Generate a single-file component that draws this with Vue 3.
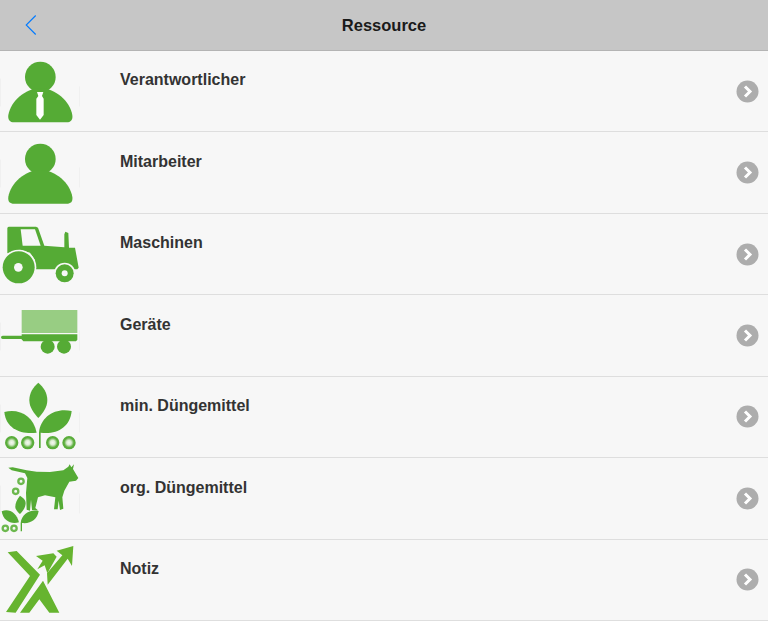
<script setup>
const rows = [
  { label: 'Verantwortlicher', icon: 'boss', top: 153, edges: true },
  { label: 'Mitarbeiter', icon: 'staff', top: 396, edges: true },
  { label: 'Maschinen', icon: 'tractor', top: -3, edges: false },
  { label: 'Geräte', icon: 'cart', top: 240, edges: true },
  { label: 'min. Düngemittel', icon: 'plant', top: 3, edges: true },
  { label: 'org. Düngemittel', icon: 'cow', top: 0, edges: true },
  { label: 'Notiz', icon: 'note', top: 0, edges: false }
]
</script>

<template>
  <div class="page">
    <header class="bar">
      <svg class="back" width="14" height="24" viewBox="0 0 14 24">
        <path d="M11.7 2.5 2.2 12l9.5 9.5" fill="none" stroke="#007aff" stroke-width="1.1" />
      </svg>
      <h1 class="title">Ressource</h1>
    </header>
    <ul class="list">
      <li v-for="row in rows" :key="row.label" class="row">
        <svg class="icon" width="80" height="80" :viewBox="`0 ${row.top} 240 240`">
          <defs>
            <radialGradient id="dot">
              <stop offset="0" stop-color="#f4f9f1" />
              <stop offset=".35" stop-color="#dcecd3" />
              <stop offset=".72" stop-color="#5dae3e" />
              <stop offset="1" stop-color="#56ac36" />
            </radialGradient>
          </defs>
          <g v-if="row.edges" :transform="`translate(0 ${row.top})`" fill="#eeeeee">
            <rect x="0" y="83" width="2" height="83" />
            <rect x="237" y="106" width="2" height="60" />
          </g>
          <g v-if="row.icon === 'boss'" fill="#55ab35">
            <circle cx="121" cy="231" r="46" />
            <path d="M25 345C32 305 75 265 121 265 167 265 210 305 217 345 219 360 212 367 200 367H42C30 367 23 360 25 345Z" />
            <path d="M111 276H130L126 288 131 296V345L120 359 109 345V296L115 288Z" fill="#fff" />
          </g>
          <g v-else-if="row.icon === 'staff'" fill="#55ab35">
            <circle cx="121" cy="477" r="46" />
            <path d="M25 590C32 550 75 510 121 510 167 510 210 550 217 590 219 605 212 611 200 611H42C30 611 23 605 25 590Z" />
          </g>
          <g v-else-if="row.icon === 'tractor'" fill="#55ab35">
            <path d="M22 38 26 35H108L114 38 133 92 193 97V58L196 50 205 54 207 98H225L236 158 232 163H105V135L90 113 60 104 22 115Z" />
            <path d="M62 43H105L122 92H68Z" fill="#f7f7f7" />
            <circle cx="56" cy="157" r="53" fill="#f7f7f7" />
            <circle cx="56" cy="157" r="48" />
            <circle cx="55" cy="157" r="13" fill="#f7f7f7" />
            <circle cx="194" cy="175" r="32" fill="#f7f7f7" />
            <circle cx="194" cy="175" r="27" />
            <circle cx="194" cy="175" r="9" fill="#f7f7f7" />
          </g>
          <g v-else-if="row.icon === 'cart'" fill="#55ab35">
            <rect x="65" y="285" width="167" height="69" fill="#98cd83" />
            <path d="M65 358H232V374L228 379H70L64 372H8Q3 372 3 367T8 362H65Z" />
            <circle cx="143" cy="395" r="21" />
            <circle cx="192" cy="395" r="21" />
          </g>
          <g v-else-if="row.icon === 'plant'" fill="#55ab35">
            <path d="M115 20C100 33 88 50 88 72 88 95 102 112 115 126 128 112 142 95 142 72 142 50 130 33 115 20Z" />
            <path d="M13 108C55 96 100 118 110 170 65 176 18 160 13 108Z" />
            <path d="M215 105C165 94 122 122 117 170V216H122V170C170 176 210 155 215 105Z" />
            <circle cx="35" cy="200" r="20" fill="url(#dot)" />
            <circle cx="83" cy="200" r="20" fill="url(#dot)" />
            <circle cx="158" cy="200" r="20" fill="url(#dot)" />
            <circle cx="207" cy="200" r="20" fill="url(#dot)" />
          </g>
          <g v-else-if="row.icon === 'cow'" fill="#55ab35">
            <path d="M25 29 38 28 80 37 110 41 150 42 190 37 205 26 209 19 214 28 222 19 219 33 235 60 228 68 208 71 193 98 187 118 190 152 180 156 176 128 173 154 162 154 166 118 135 112 114 118 106 150 114 157 96 156 93 125 90 158 80 155 78 105 82 60 75 46 35 37Z" />
            <path d="M60 113C47 128 44 145 47 152 51 160 56 165 60 168 68 160 77 148 77 135 77 125 68 118 60 113Z" />
            <path d="M5 160C27 150 50 165 57 193 33 199 10 190 5 160Z" />
            <path d="M116 159C88 153 65 170 62 195V220H66V195C92 198 112 185 116 159Z" />
            <g fill="none" stroke="#6cb84e" stroke-width="7">
              <circle cx="63" cy="70" r="8" />
              <circle cx="47" cy="100" r="8" />
              <circle cx="16" cy="211" r="8" />
              <circle cx="42" cy="211" r="8" />
            </g>
          </g>
          <g v-else fill="#66b42f">
            <path d="M23 37 50 33 120 104 47 218 18 216 90 108Z" />
            <path d="M60 218 129 122 178 218 148 218 118 178 88 218Z" />
            <path d="M170 32 220 18 216 78 203 56 143 134 141 100 187 46Z" />
            <path d="M108 48 160 40 170 50 142 100 134 76 112 88 128 62Z" />
          </g>
        </svg>
        <span class="label">{{ row.label }}</span>
        <svg class="go" width="23" height="23" viewBox="0 0 23 23">
          <circle cx="11.5" cy="11.5" r="11" fill="#adadad" />
          <path d="M9 6.5 14 11.5 9 16.5" fill="none" stroke="#fff" stroke-width="3" />
        </svg>
      </li>
    </ul>
  </div>
</template>

<style scoped>
.page {
  width: 768px;
  height: 621px;
  display: flex;
  flex-direction: column;
  background: #f7f7f7;
  font-family: "Liberation Sans", Arial, sans-serif;
  overflow: hidden;
}
.bar {
  position: relative;
  box-sizing: border-box;
  flex: 0 0 51px;
  display: flex;
  align-items: center;
  justify-content: center;
  background: #c6c6c6;
  border-bottom: 1px solid #b4b4b4;
}
.back {
  position: absolute;
  left: 24px;
  top: 13px;
}
.title {
  margin: 0;
  font-size: 16.5px;
  font-weight: 700;
  color: #1a1a1a;
}
.list {
  flex: 1;
  min-height: 0;
  margin: 0;
  padding: 0;
  list-style: none;
  display: grid;
  grid-template-rows: repeat(7, minmax(0, 1fr));
}
.row {
  box-sizing: border-box;
  display: flex;
  align-items: flex-start;
  border-bottom: 1px solid #dedede;
  min-height: 0;
}
.icon {
  flex: none;
}
.label {
  margin: 19.4px 0 0 40px;
  font-size: 16px;
  line-height: 20px;
  font-weight: 700;
  color: #333;
}
.go {
  margin: 28.7px 9px 0 auto;
}
</style>
